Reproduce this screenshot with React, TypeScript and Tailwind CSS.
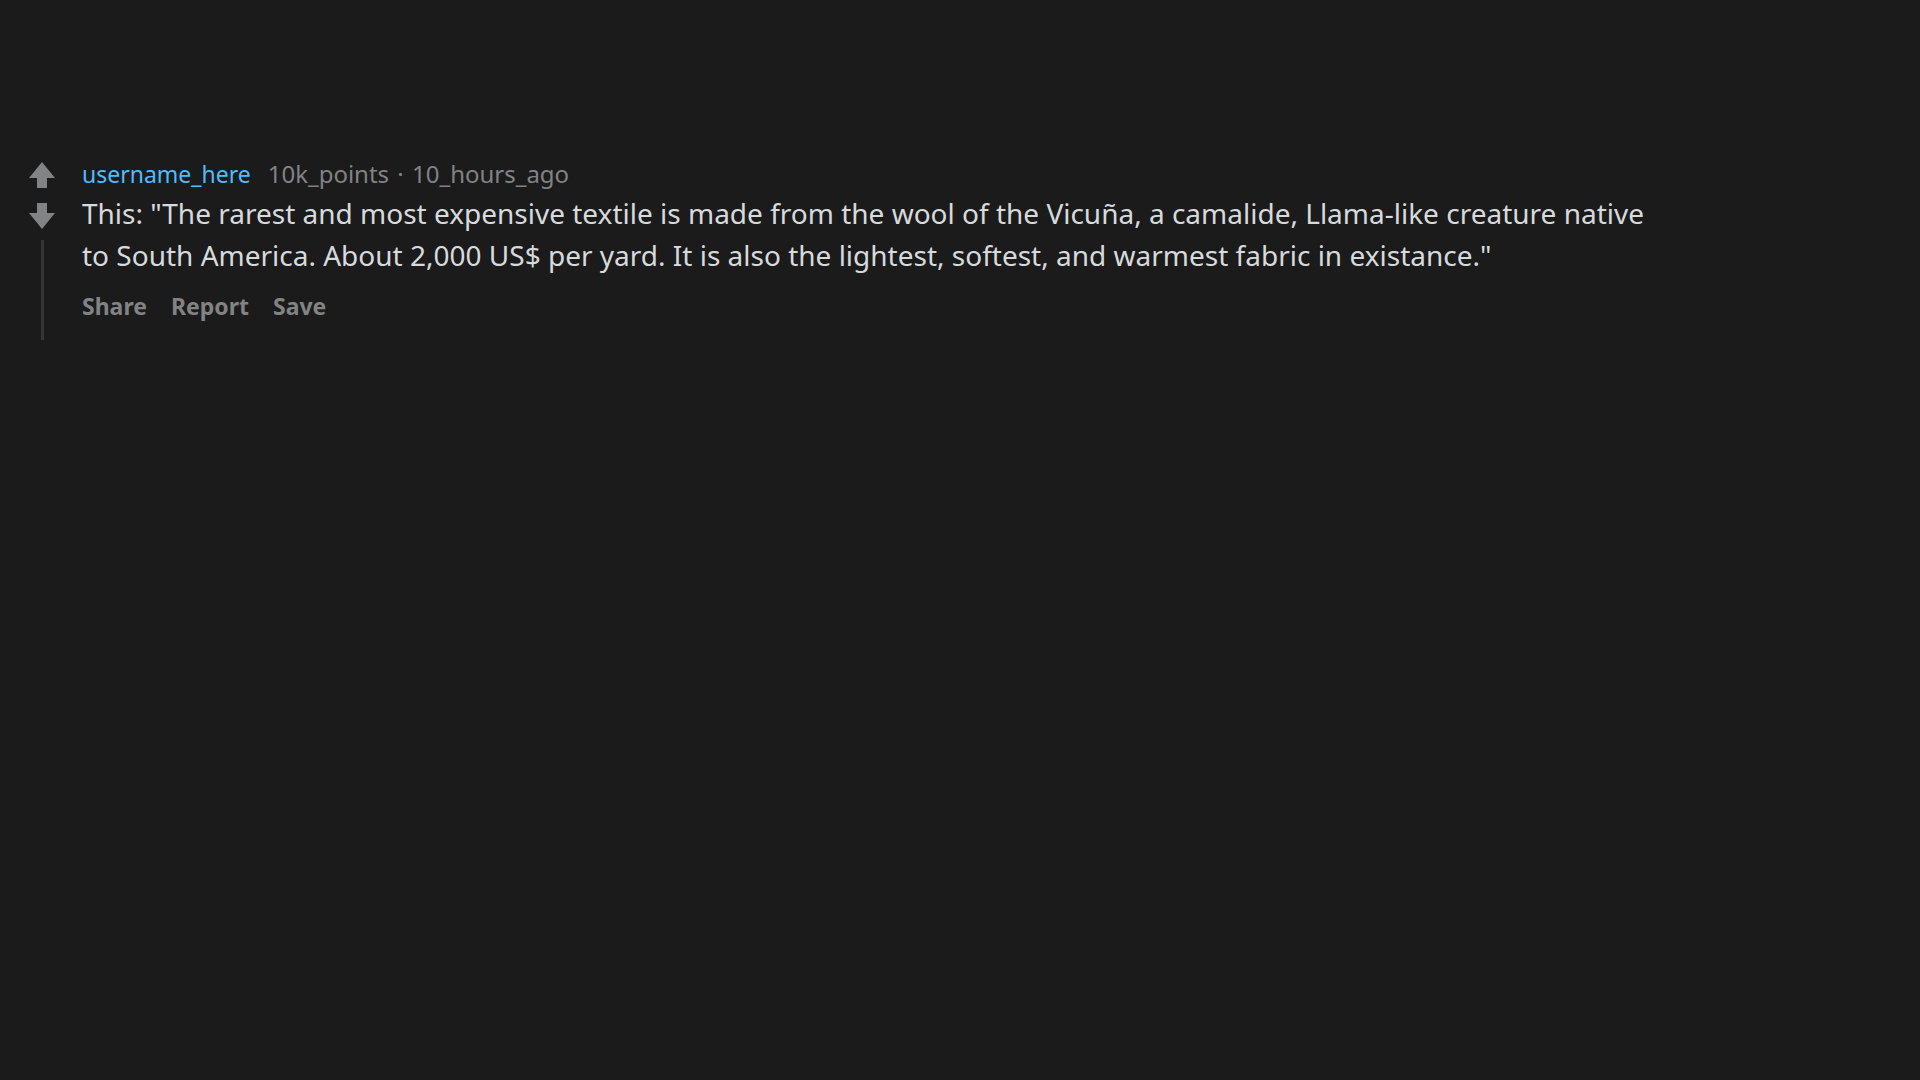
import React from "react";

function VoteArrow({ down = false }: { down?: boolean }) {
  return (
    <svg
      width="26"
      height="26"
      viewBox="0 0 26 26"
      className={down ? "rotate-180" : ""}
      fill="#818384"
    >
      <path d="M13 0 L26 16 H18 V26 H8 V16 H0 Z" />
    </svg>
  );
}

export default function App() {
  return (
    <div
      className="min-h-[2164px] bg-[#1b1b1b] pt-[158px]"
      style={{ fontFamily: '"Noto Sans", sans-serif' }}
    >
      <div className="flex items-start pl-[29px]">
        {/* votes + thread line */}
        <div className="flex flex-col items-center w-[26px] pt-[4px]">
          <VoteArrow />
          <div className="mt-[15px]">
            <VoteArrow down />
          </div>
          <div className="mt-[11px] w-[3px] h-[100px] bg-[#343536]" />
        </div>

        <div className="ml-[27px] w-[1580px]">
          <div className="flex items-center gap-[17px] leading-[32px]">
            <span className="text-[23px] text-[#4fbcff]">username_here</span>
            <span className="text-[24px] text-[#818384]">
              10k_points <span className="mx-[2px]">·</span> 10_hours_ago
            </span>
          </div>
          <p className="mt-[2px] text-[28px] leading-[42px] text-[#d7dadc]">
            This: "The rarest and most expensive textile is made from the wool
            of the Vicuña, a camalide, Llama-like creature native to South
            America. About 2,000 US$ per yard. It is also the lightest,
            softest, and warmest fabric in existance."
          </p>
          <div className="mt-[14px] flex items-center gap-[24px] text-[23px] leading-[32px] font-bold text-[#818384]">
            <span>Share</span>
            <span>Report</span>
            <span>Save</span>
          </div>
        </div>
      </div>
    </div>
  );
}
